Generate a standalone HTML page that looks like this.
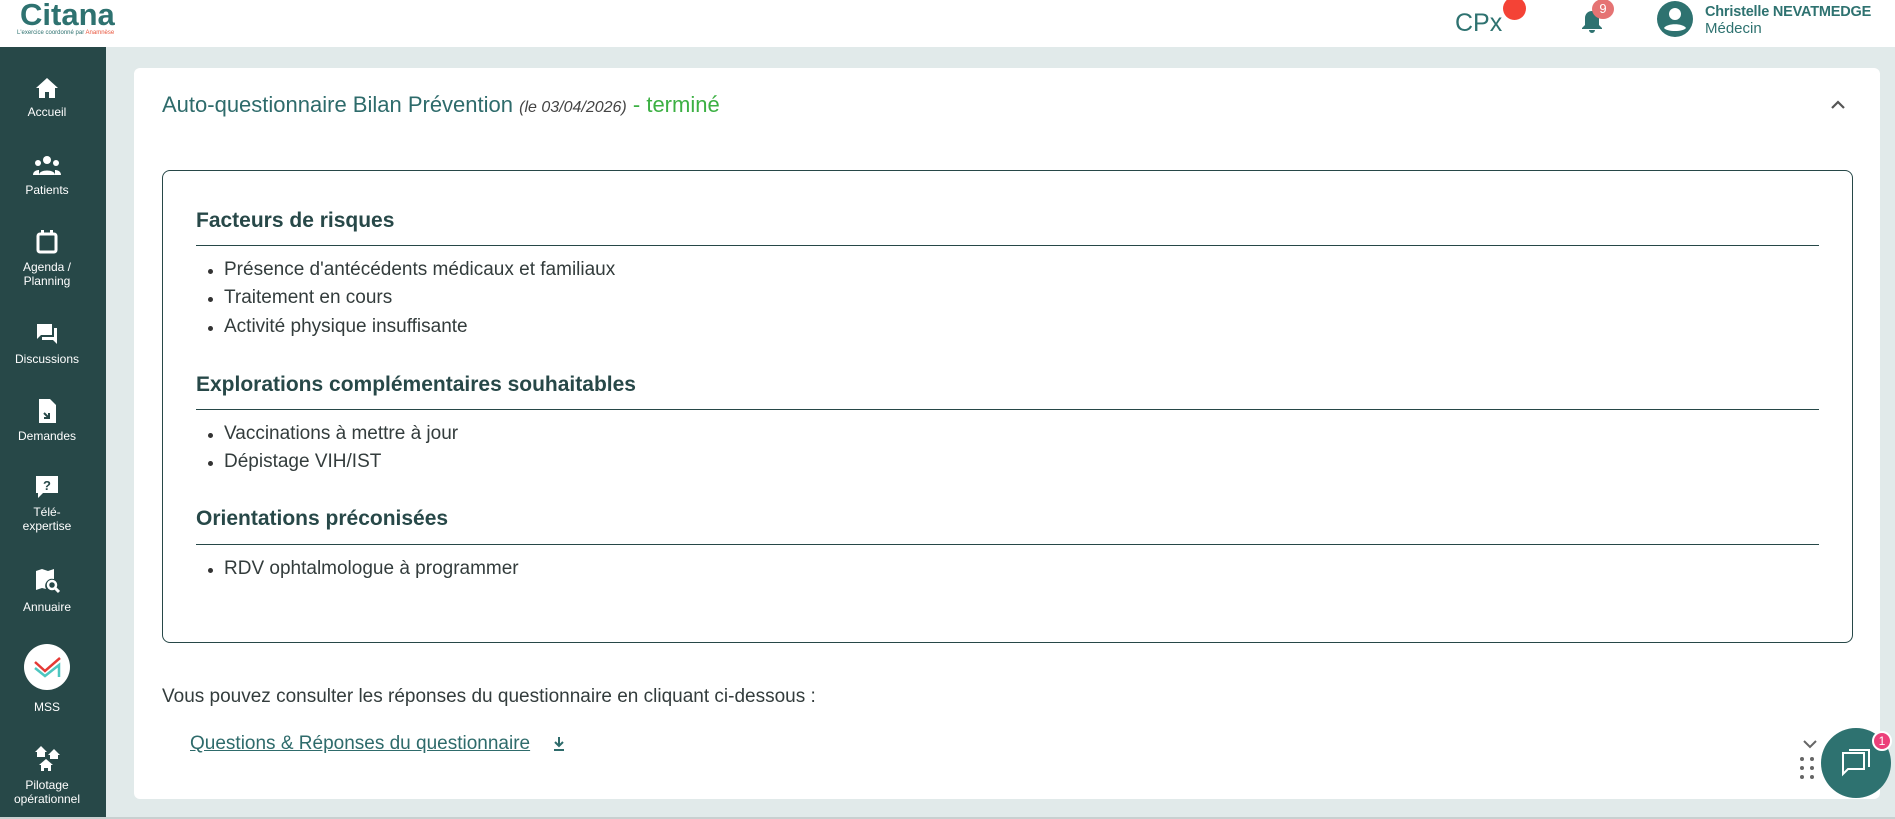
<!DOCTYPE html>
<html><head><meta charset="utf-8"><style>
*{margin:0;padding:0;box-sizing:border-box}
body{width:1895px;height:819px;overflow:hidden;font-family:"Liberation Sans",sans-serif;background:#e1eaea;position:relative}
.hdr{position:absolute;left:0;top:0;width:1895px;height:47px;background:#fff}
.side{position:absolute;left:0;top:47px;width:106px;height:772px;background:#274848}
.it{position:absolute;left:0;width:94px;text-align:center;color:#fff;font-size:12px;line-height:14px}
.it svg{display:block;margin:0 auto 6px}
.card{position:absolute;left:134px;top:68px;width:1746px;height:731px;background:#fff;border-radius:6px}
.box{position:absolute;left:162px;top:170px;width:1691px;height:473px;border:1px solid #274848;border-radius:8px}
h3{position:absolute;left:196px;font-size:21px;color:#274848;font-weight:bold}
.ln{position:absolute;left:196px;width:1623px;height:1px;background:#274848}
.b{position:absolute;left:224px;font-size:19px;color:#333c3c}
.b:before{content:"";position:absolute;left:-16px;top:10px;width:5px;height:5px;border-radius:50%;background:#333}
</style></head><body>
<div class="hdr">
<div style="position:absolute;left:20px;top:-3px;font-size:31px;color:#2e7270;font-weight:bold">Citana</div>
<div style="position:absolute;left:17px;top:30px;font-size:6px;color:#2e7270">L'exercice coordonné par <span style="color:#e8553c">Anamnèse</span></div>
<div style="position:absolute;left:1455px;top:9px;font-size:25px;color:#2e7270">CPx</div>
<div style="position:absolute;left:1503px;top:-3px;width:23px;height:23px;border-radius:50%;background:#f44336"></div>
<svg style="position:absolute;left:1580px;top:9px" width="24" height="26" viewBox="0 0 24 26"><path d="M12 2c-4 0-7 3-7 7v7l-3 3v1h20v-1l-3-3V9c0-4-3-7-7-7zM9 21a3 3 0 006 0z" fill="#2e7270"/></svg>
<div style="position:absolute;left:1592px;top:-1px;width:22px;height:20px;border-radius:50%;background:#e57373;color:#fff;font-size:13px;text-align:center;line-height:20px">9</div>
<svg style="position:absolute;left:1657px;top:1px" width="36" height="36" viewBox="0 0 36 36"><circle cx="18" cy="18" r="18" fill="#2e7270"/><circle cx="18" cy="13" r="6" fill="#fff"/><path d="M7 27c3-5 19-5 22 0-3 4-19 4-22 0z" fill="#fff"/></svg>
<div style="position:absolute;left:1705px;top:4px;font-size:14.5px;font-weight:bold;color:#2e7270;letter-spacing:-0.2px">Christelle NEVATMEDGE</div>
<div style="position:absolute;left:1705px;top:20px;font-size:15px;color:#2e7270">Médecin</div>
</div>
<div class="side">
<div class="it" style="top:30px"><svg width="24" height="22" viewBox="0 0 24 22"><path d="M12 1L1 11h3v10h6v-6h4v6h6V11h3z" fill="#fff"/></svg>Accueil</div>
<div class="it" style="top:108px"><svg width="30" height="22" viewBox="0 0 30 22"><circle cx="15" cy="5" r="4" fill="#fff"/><circle cx="6" cy="8" r="3" fill="#fff"/><circle cx="24" cy="8" r="3" fill="#fff"/><path d="M7 20c0-6 16-6 16 0zM1 20c0-4 4-5 6-5v5zM29 20c0-4-4-5-6-5v5z" fill="#fff"/></svg>Patients</div>
<div class="it" style="top:183px"><svg width="22" height="24" viewBox="0 0 22 24"><rect x="2" y="4" width="18" height="18" rx="2" fill="none" stroke="#fff" stroke-width="3"/><rect x="5" y="0" width="3" height="5" fill="#fff"/><rect x="14" y="0" width="3" height="5" fill="#fff"/></svg>Agenda /<br>Planning</div>
<div class="it" style="top:275px"><svg width="24" height="24" viewBox="0 0 24 24"><path d="M2 2h15v11H6l-4 4zM19 6h3v16l-4-4H7v-3h12z" fill="#fff"/></svg>Discussions</div>
<div class="it" style="top:352px"><svg width="20" height="24" viewBox="0 0 20 24"><path d="M2 0h11l6 6v18H2z" fill="#fff"/><path d="M7 14l5 5M12 14v5H7" stroke="#274848" stroke-width="2" fill="none"/></svg>Demandes</div>
<div class="it" style="top:428px"><svg width="24" height="24" viewBox="0 0 24 24"><path d="M1 1h22v17H8l-5 5V18H1z" fill="#fff"/><text x="12" y="15" font-size="13" font-weight="bold" fill="#274848" text-anchor="middle" font-family="Liberation Sans">?</text></svg>Télé-<br>expertise</div>
<div class="it" style="top:521px"><svg width="26" height="26" viewBox="0 0 26 26"><path d="M2 3l6-2 6 2 6-2v10a7 7 0 00-8 10l-4-1-6 2z" fill="#fff"/><circle cx="18" cy="17" r="4" fill="none" stroke="#fff" stroke-width="2.5"/><path d="M21 20l4 4" stroke="#fff" stroke-width="3"/></svg>Annuaire</div>
<div class="it" style="top:597px"><div style="width:46px;height:46px;border-radius:50%;background:#fff;margin:0 auto 10px;position:relative"><svg width="46" height="46" viewBox="0 0 46 46"><path d="M11 18l10 9 15-13" stroke="#e53935" stroke-width="2.5" fill="none"/><path d="M11 24l10 8 14-11v12" stroke="#4dc6c0" stroke-width="2.5" fill="none"/></svg></div>MSS</div>
<div class="it" style="top:699px"><svg width="28" height="26" viewBox="0 0 28 26"><path d="M8 0l6 6h-2v5H4V6H2zM21 3l6 6h-2v4h-8V9h-2zM13 13l7 6h-2v6h-3v-3h-4v3H8v-6H6z" fill="#fff"/></svg>Pilotage<br>opérationnel</div>
</div>
<div class="card"></div>
<div style="position:absolute;left:162px;top:92px;font-size:22px;color:#2e6b6b">Auto-questionnaire Bilan Prévention <i style="font-size:16px;color:#444">(le 03/04/2026)</i> <span style="color:#3cb043">- terminé</span></div>
<svg style="position:absolute;left:1830px;top:99px" width="16" height="12" viewBox="0 0 16 12"><path d="M2 9l6-6 6 6" stroke="#555" stroke-width="2.2" fill="none"/></svg>
<div class="box"></div>
<h3 style="top:209px">Facteurs de risques</h3><div class="ln" style="top:245px"></div>
<div class="b" style="top:259px">Présence d'antécédents médicaux et familiaux</div>
<div class="b" style="top:287px">Traitement en cours</div>
<div class="b" style="top:316px">Activité physique insuffisante</div>
<h3 style="top:373px">Explorations complémentaires souhaitables</h3><div class="ln" style="top:409px"></div>
<div class="b" style="top:423px">Vaccinations à mettre à jour</div>
<div class="b" style="top:451px">Dépistage VIH/IST</div>
<h3 style="top:507px">Orientations préconisées</h3><div class="ln" style="top:544px"></div>
<div class="b" style="top:558px">RDV ophtalmologue à programmer</div>
<div style="position:absolute;left:162px;top:686px;font-size:19px;color:#333c3c">Vous pouvez consulter les réponses du questionnaire en cliquant ci-dessous :</div>
<div style="position:absolute;left:190px;top:733px;font-size:19px;color:#2e6b6b;text-decoration:underline">Questions &amp; Réponses du questionnaire</div>
<svg style="position:absolute;left:552px;top:736px" width="14" height="16" viewBox="0 0 14 16"><path d="M7 1v9M3 6l4 4 4-4M2 14h10" stroke="#2e6b6b" stroke-width="2" fill="none"/></svg>
<svg style="position:absolute;left:1802px;top:739px" width="16" height="10" viewBox="0 0 16 10"><path d="M2 2l6 6 6-6" stroke="#666" stroke-width="2" fill="none"/></svg>
<svg style="position:absolute;left:1799px;top:756px" width="16" height="24" viewBox="0 0 16 24"><g fill="#666"><circle cx="3" cy="3" r="2"/><circle cx="13" cy="3" r="2"/><circle cx="3" cy="12" r="2"/><circle cx="13" cy="12" r="2"/><circle cx="3" cy="21" r="2"/><circle cx="13" cy="21" r="2"/></g></svg>
<div style="position:absolute;left:1821px;top:728px;width:70px;height:70px;border-radius:50%;background:#2e7270"></div>
<svg style="position:absolute;left:1838px;top:745px" width="36" height="36" viewBox="0 0 36 36"><path d="M8 8h18v16H10l-5 5V8zM11 5h20v17" stroke="#fff" stroke-width="2" fill="none"/></svg>
<div style="position:absolute;left:1872px;top:731px;width:20px;height:20px;border-radius:50%;background:#ec407a;border:2px solid #fff;color:#fff;font-size:12px;text-align:center;line-height:16px">1</div>
<div style="position:absolute;left:0;top:817px;width:1895px;height:2px;background:#c8d0d0"></div>
</body></html>
